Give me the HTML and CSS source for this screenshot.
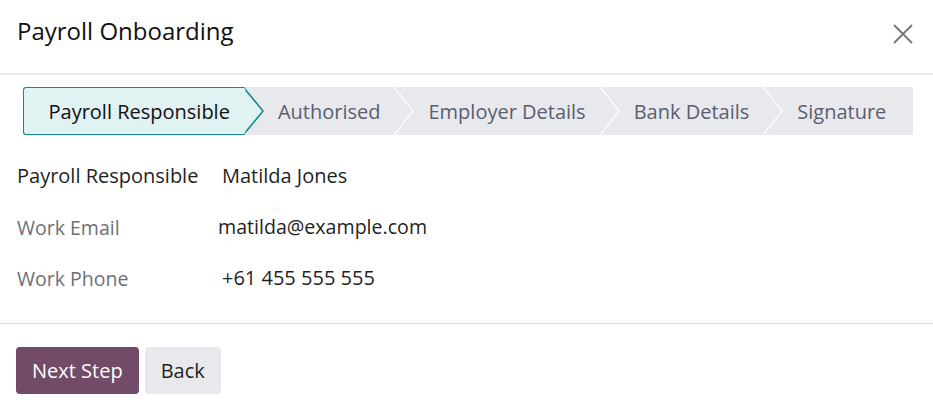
FILE: index.html
```html
<!DOCTYPE html>
<html lang="en">
<head>
<meta charset="utf-8">
<title>Payroll Onboarding</title>
<link rel="stylesheet" href="styles.css">
</head>
<body>
<div class="dialog">
  <header class="header">
    <h1 class="title">Payroll Onboarding</h1>
    <button class="close" aria-label="Close">
      <svg width="20" height="20" viewBox="0 0 20 20"><path d="M1 1 L19 19 M19 1 L1 19" stroke="#7a7a7a" stroke-width="2" fill="none"/></svg>
    </button>
  </header>
  <main class="content">
    <nav class="statusbar">
      <span class="step step-first step-active">Payroll Responsible</span>
      <svg class="sep" width="20" height="48" viewBox="0 0 20 48"><polygon points="0,1 19,24 0,47" fill="#e1f2f3" stroke="#0f8a8f" stroke-width="1.6"/><rect x="0" y="1.6" width="1.2" height="44.8" fill="#e1f2f3"/></svg>
      <span class="step">Authorised</span>
      <svg class="sep" width="20" height="48" viewBox="0 0 20 48"><polyline points="0,0 19,24 0,48" fill="none" stroke="#ffffff" stroke-width="1.2"/></svg>
      <span class="step">Employer Details</span>
      <svg class="sep" width="20" height="48" viewBox="0 0 20 48"><polyline points="0,0 19,24 0,48" fill="none" stroke="#ffffff" stroke-width="1.2"/></svg>
      <span class="step">Bank Details</span>
      <svg class="sep" width="20" height="48" viewBox="0 0 20 48"><polyline points="0,0 19,24 0,48" fill="none" stroke="#ffffff" stroke-width="1.2"/></svg>
      <span class="step step-last">Signature</span>
    </nav>
    <div class="fields">
      <div class="label label-strong">Payroll Responsible</div>
      <div class="value">Matilda Jones</div>
      <div class="label">Work Email</div>
      <div class="value value-tight">matilda@example.com</div>
      <div class="label">Work Phone</div>
      <div class="value">+61 455 555 555</div>
    </div>
  </main>
  <footer class="footer">
    <button class="btn btn-primary">Next Step</button>
    <button class="btn btn-secondary">Back</button>
  </footer>
</div>
</body>
</html>
```
FILE: styles.css
```css
* { box-sizing: border-box; }
html, body { margin: 0; padding: 0; background: #ffffff; }
body {
  font-family: "Open Sans", "Noto Sans", sans-serif;
  color: #1f1f1f;
  width: 933px;
  height: 406px;
  overflow: hidden;
}
.header {
  display: flex;
  align-items: center;
  justify-content: space-between;
  height: 75px;
  padding: 0 20px 11px 17px;
  border-bottom: 2px solid #e6e6e6;
}
.title {
  margin: 0;
  font-size: 24px;
  font-weight: 400;
  color: #111111;
  line-height: 32px;
}
.close {
  border: 0;
  background: none;
  padding: 0;
  width: 20px;
  height: 20px;
  display: flex;
  margin-top: 6px;
}
.content {
  padding: 12px 20px 0 23px;
}
.statusbar {
  display: flex;
  align-items: stretch;
  height: 48px;
  background: #e7e9ed;
  border-radius: 2px;
}
.step {
  display: flex;
  align-items: center;
  padding: 0 14px;
  font-size: 20px;
  font-weight: 500;
  color: #5a5e6e;
  white-space: nowrap;
}
.step-first { padding-left: 24.5px; }
.step-last { padding-right: 26px; flex: 1; }
.step-active {
  background: #e1f2f3;
  color: #111111;
  border: 1.6px solid #0f8a8f;
  border-right: 0;
  border-radius: 3px 0 0 3px;
}
.sep { display: block; flex: none; }
.fields {
  display: grid;
  grid-template-columns: 201px 1fr;
  grid-auto-rows: 51px;
  align-items: center;
  margin: 15px 0 0 -6px;
}
.label {
  font-size: 19.5px;
  color: #6c6f78;
  padding-top: 1px;
}
.label-strong {
  font-size: 20px;
  color: #1f1f1f;
  font-weight: 500;
  padding-top: 0;
}
.value {
  font-size: 20px;
  color: #1f1f1f;
  padding-left: 4px;
}
.value-tight { padding-left: 0; font-size: 19.6px; }
.footer {
  margin-top: 20px;
  border-top: 1px solid #dedede;
  padding: 23px 16px 0;
  display: flex;
  gap: 6px;
}
.btn {
  font-family: inherit;
  font-size: 20px;
  height: 47px;
  padding: 0 16px;
  border: 0;
  border-radius: 4px;
  line-height: 47px;
}
.btn-primary { background: #714b67; color: #ffffff; }
.btn-secondary { background: #e7e9ed; color: #1f1f1f; }
```
